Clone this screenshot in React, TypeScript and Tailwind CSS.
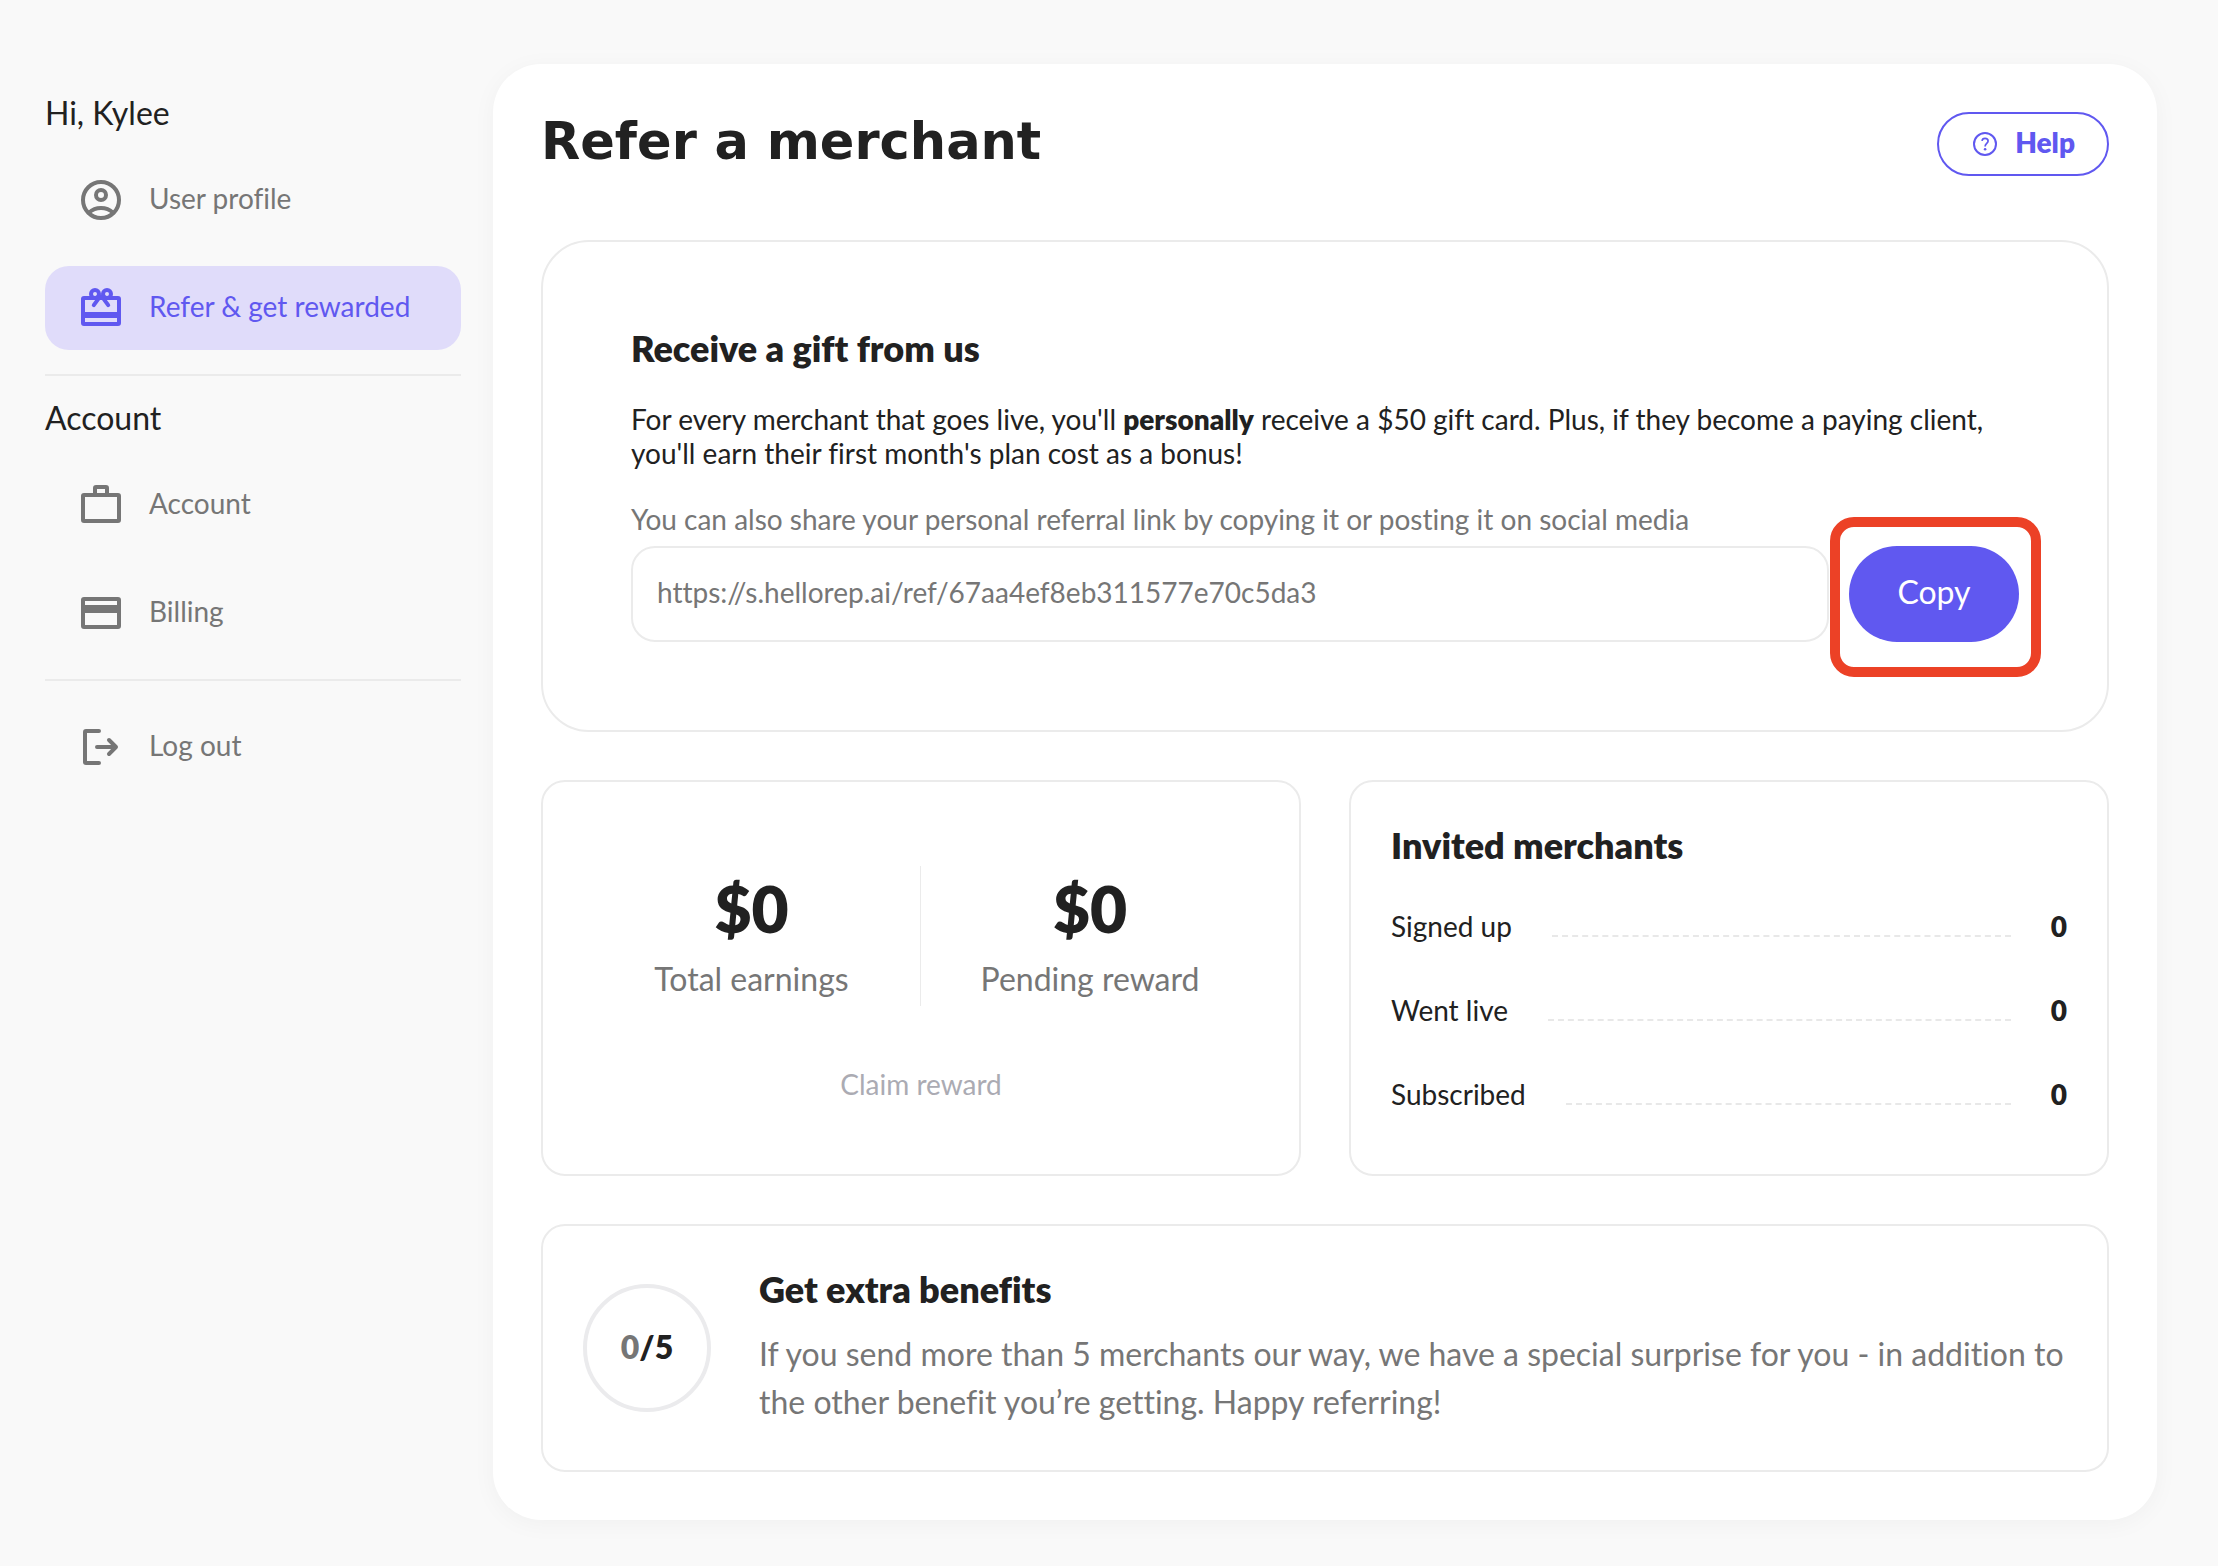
import type { ReactNode } from "react";

type NavItem = { label: string; href: string; icon: ReactNode; active?: boolean };

function Icon({ children }: { children: ReactNode }) {
  return (
    <svg
      viewBox="0 0 24 24"
      className="size-12 shrink-0"
      fill="none"
      stroke="currentColor"
      strokeWidth="2"
      strokeLinecap="round"
      strokeLinejoin="round"
      aria-hidden="true"
    >
      {children}
    </svg>
  );
}

const profileLinks: NavItem[] = [
  {
    label: "User profile",
    href: "#profile",
    icon: (
      <Icon>
        <circle cx="12" cy="12" r="9" />
        <circle cx="12" cy="9.5" r="2.5" />
        <path d="M6 18.3C7.6 16.8 9.7 16 12 16s4.4.8 6 2.3" />
      </Icon>
    ),
  },
  {
    label: "Refer & get rewarded",
    href: "#refer",
    active: true,
    icon: (
      <Icon>
        <rect x="3" y="7" width="18" height="13" rx="0.5" />
        <path d="M3 15.5h18" strokeWidth="3" strokeLinecap="butt" />
        <circle cx="9" cy="5" r="2" />
        <circle cx="15" cy="5" r="2" />
        <path d="M11.5 6.3 8.4 10.6M12.5 6.3l3.1 4.3M10.5 6.5h3" />
      </Icon>
    ),
  },
];

const accountLinks: NavItem[] = [
  {
    label: "Account",
    href: "#account",
    icon: (
      <Icon>
        <rect x="3" y="7" width="18" height="13" rx="0.5" />
        <path d="M9 7V3.5a.5.5 0 0 1 .5-.5h5a.5.5 0 0 1 .5.5V7" />
      </Icon>
    ),
  },
  {
    label: "Billing",
    href: "#billing",
    icon: (
      <Icon>
        <rect x="3" y="5" width="18" height="14" rx="0.5" />
        <path d="M3 10h18" strokeWidth="4" strokeLinecap="butt" />
      </Icon>
    ),
  },
];

const logoutLinks: NavItem[] = [
  {
    label: "Log out",
    href: "#logout",
    icon: (
      <Icon>
        <path d="M11 4H4.5a.5.5 0 0 0-.5.5v15a.5.5 0 0 0 .5.5H11" />
        <path d="M10 12h9M16 8.5l3.5 3.5-3.5 3.5" />
      </Icon>
    ),
  },
];

const inviteStats = [
  { label: "Signed up", value: 0 },
  { label: "Went live", value: 0 },
  { label: "Subscribed", value: 0 },
];

const REFERRAL_LINK = "https://s.hellorep.ai/ref/67aa4ef8eb311577e70c5da3";

function NavList({ items }: { items: NavItem[] }) {
  return (
    <ul className="flex flex-col gap-6">
      {items.map((item) => (
        <li key={item.href}>
          <a
            href={item.href}
            aria-current={item.active ? "page" : undefined}
            className={
              item.active
                ? "flex h-21 items-center gap-6 rounded-3xl bg-[#e0dcfa] px-8 text-[28px] text-[#6058f0]"
                : "flex h-21 items-center gap-6 rounded-3xl px-8 text-[28px] text-[#767676]"
            }
          >
            {item.icon}
            <span className="pb-1">{item.label}</span>
          </a>
        </li>
      ))}
    </ul>
  );
}

function Sidebar() {
  return (
    <aside className="w-[416px] shrink-0 pt-[30px]">
      <nav aria-label="Primary">
        <h2 className="mb-[26px] text-[32px] leading-[38px]">Hi, Kylee</h2>
        <NavList items={profileLinks} />
        <hr className="mt-6 mb-[23px] border-t-2 border-[#ebebeb]" />
        <h2 className="mb-[26px] text-[32px] leading-[38px]">Account</h2>
        <NavList items={accountLinks} />
        <hr className="my-6 border-t-2 border-[#ebebeb]" />
        <NavList items={logoutLinks} />
      </nav>
    </aside>
  );
}

function HelpButton() {
  return (
    <button
      type="button"
      className="flex h-16 items-center gap-[18px] rounded-full border-2 border-[#6058f0] pr-8 pl-[34px] text-[28px] font-extrabold text-[#6058f0]"
    >
      <svg viewBox="0 0 24 24" className="size-6" fill="none" stroke="currentColor" strokeWidth="2" aria-hidden="true">
        <circle cx="12" cy="12" r="11" />
        <path d="M9 8.9C9.2 7.200 10.400 6.300 12 6.300c1.800 0 3.100 1.100 3.100 2.700 0 2.200-3 2.600-3 5.400" strokeWidth="1.700" />
        <circle cx="12.100" cy="17.300" r="1.300" fill="currentColor" stroke="none" />
      </svg>
      <span className="pb-1">Help</span>
    </button>
  );
}

function GiftCard() {
  return (
    <section className="rounded-[48px] border-2 border-[#ebebeb] p-22">
      <h2 className="text-[36px] leading-9 font-extrabold">Receive a gift from us</h2>
      <p className="mt-9 text-[28px] leading-[34px]">
        For every merchant that goes live, you'll <strong className="font-extrabold">personally</strong> receive a $50
        gift card. Plus, if they become a paying client, you'll earn their first month's plan cost as a bonus!
      </p>
      <label htmlFor="referral-link" className="mt-8 mb-2.5 block text-[28px] leading-[34px] text-[#767676]">
        You can also share your personal referral link by copying it or posting it on social media
      </label>
      <div className="flex gap-5">
        <input
          id="referral-link"
          type="text"
          readOnly
          value={REFERRAL_LINK}
          className="h-24 min-w-0 flex-1 rounded-3xl border-2 border-[#ebebeb] px-6 pb-1 text-[28px] text-[#767676]"
        />
        <div className="relative">
          <button type="button" className="h-24 w-[170px] rounded-full bg-[#6058f0] pb-1 text-[32px] text-white">
            Copy
          </button>
          <span
            aria-hidden="true"
            className="pointer-events-none absolute -top-[29px] -right-[22px] -bottom-[35px] -left-[19px] rounded-3xl border-10 border-[#ec4126]"
          />
        </div>
      </div>
    </section>
  );
}

function EarningsCard() {
  return (
    <section className="flex flex-col items-center rounded-3xl border-2 border-[#ebebeb] px-10 pt-21">
      <dl className="grid h-35 w-full grid-cols-2 divide-x divide-[#ebebeb] text-center">
        <div className="flex flex-col-reverse justify-center gap-2.5 pt-1">
          <dt className="text-[32px] leading-12 text-[#767676]">Total earnings</dt>
          <dd className="text-[64px] leading-18 font-extrabold">$0</dd>
        </div>
        <div className="flex flex-col-reverse justify-center gap-2.5 pt-1">
          <dt className="text-[32px] leading-12 text-[#767676]">Pending reward</dt>
          <dd className="text-[64px] leading-18 font-extrabold">$0</dd>
        </div>
      </dl>
      <button type="button" disabled className="mt-[46px] h-16 px-8 text-[28px] text-[#ababb3]">
        Claim reward
      </button>
    </section>
  );
}

function InvitedCard() {
  return (
    <section className="rounded-3xl border-2 border-[#ebebeb] p-10 pb-[62px]">
      <h2 className="text-[36px] leading-[46px] font-extrabold">Invited merchants</h2>
      <dl className="mt-10 flex flex-col gap-12 text-[28px] leading-9">
        {inviteStats.map((stat) => (
          <div key={stat.label} className="flex items-center gap-10">
            <dt>{stat.label}</dt>
            <div className="mt-5 flex-1 border-t-2 border-dashed border-[#e8e8e8]" />
            <dd className="font-extrabold">{stat.value}</dd>
          </div>
        ))}
      </dl>
    </section>
  );
}

function BenefitsCard() {
  return (
    <section className="flex items-center gap-12 rounded-3xl border-2 border-[#ebebeb] p-10">
      <div className="flex size-32 shrink-0 items-center justify-center rounded-full border-4 border-[#ebebed] pb-0.5 text-[32px] font-extrabold">
        <span className="text-[#767676]">0</span>/5
      </div>
      <div className="pb-1">
        <h2 className="text-[36px] leading-[46px] font-extrabold">Get extra benefits</h2>
        <p className="mt-[18px] text-[32px] leading-12 text-[#767676]">
          If you send more than 5 merchants our way, we have a special surprise for you - in addition to the other
          benefit you’re getting. Happy referring!
        </p>
      </div>
    </section>
  );
}

export default function App() {
  return (
    <div className="flex min-h-screen items-start gap-8 bg-[#f9f9f9] py-16 pr-[61px] pl-[45px] font-['Lato','Open_Sans',sans-serif] text-[#212121] [font-variant-ligatures:none]">
      <Sidebar />
      <main className="flex min-w-0 flex-1 flex-col gap-12 rounded-[48px] bg-white p-12 shadow-[0_4px_24px_rgba(0,0,0,0.04)]">
        <header className="mb-4 flex items-start justify-between">
          <h1 className="font-['DejaVu_Sans','Liberation_Sans',sans-serif] text-[51px] leading-[60px] font-bold">
            Refer a merchant
          </h1>
          <HelpButton />
        </header>
        <GiftCard />
        <div className="grid grid-cols-2 gap-12">
          <EarningsCard />
          <InvitedCard />
        </div>
        <BenefitsCard />
      </main>
    </div>
  );
}
